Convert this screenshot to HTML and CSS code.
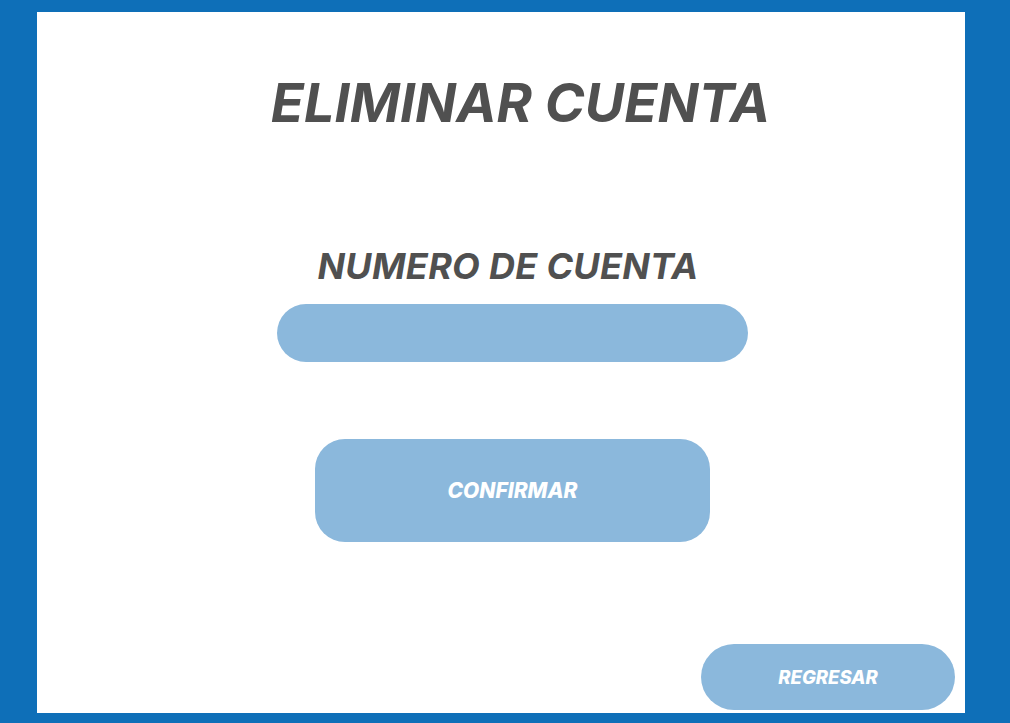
FILE: index.html
```html
<!DOCTYPE html>
<html lang="es">
<head>
<meta charset="utf-8">
<title>Eliminar cuenta</title>
<link rel="stylesheet" href="styles.css">
</head>
<body>
<main class="panel">
  <h1 class="title">ELIMINAR CUENTA</h1>
  <label class="label" for="cuenta">NUMERO DE CUENTA</label>
  <input class="field" id="cuenta" type="text">
  <button class="confirm" type="button">CONFIRMAR</button>
  <div class="footer">
    <button class="back" type="button">REGRESAR</button>
  </div>
</main>
</body>
</html>
```

FILE: styles.css
```css
html, body {
  margin: 0;
  padding: 0;
}
body {
  background: #0e6fb8;
  width: 1010px;
  height: 723px;
  padding: 12px 45px 10px 37px;
  box-sizing: border-box;
  font-family: Inter, "Noto Sans", sans-serif;
}
.panel {
  background: #ffffff;
  height: 701px;
  box-sizing: border-box;
  display: flex;
  flex-direction: column;
  align-items: center;
  padding: 64px 10px 3px 33px;
}
.title {
  margin: 0 0 0 16px;
  font-size: 54px;
  line-height: 1;
  font-weight: 700;
  font-style: italic;
  color: #505050;
  letter-spacing: 0;
}
.label {
  margin: 118px 0 0 -9px;
  font-size: 36px;
  line-height: 1;
  font-weight: 700;
  font-style: italic;
  color: #505050;
  letter-spacing: 0.3px;
}
.field {
  margin-top: 20px;
  width: 471px;
  height: 58px;
  border: none;
  border-radius: 29px;
  background: #8bb8dc;
  outline: none;
  padding: 0;
}
.confirm {
  margin-top: 77px;
  width: 395px;
  height: 103px;
  border: none;
  border-radius: 30px;
  background: #8bb8dc;
  color: #ffffff;
  font-family: inherit;
  font-size: 21px;
  font-weight: 800;
  font-style: italic;
  padding: 0;
}
.footer {
  margin-top: auto;
  align-self: stretch;
  display: flex;
  justify-content: flex-end;
}
.back {
  width: 254px;
  height: 66px;
  border: none;
  border-radius: 33px;
  background: #8bb8dc;
  color: #ffffff;
  font-family: inherit;
  font-size: 18.5px;
  font-weight: 800;
  font-style: italic;
  padding: 0;
}
```
